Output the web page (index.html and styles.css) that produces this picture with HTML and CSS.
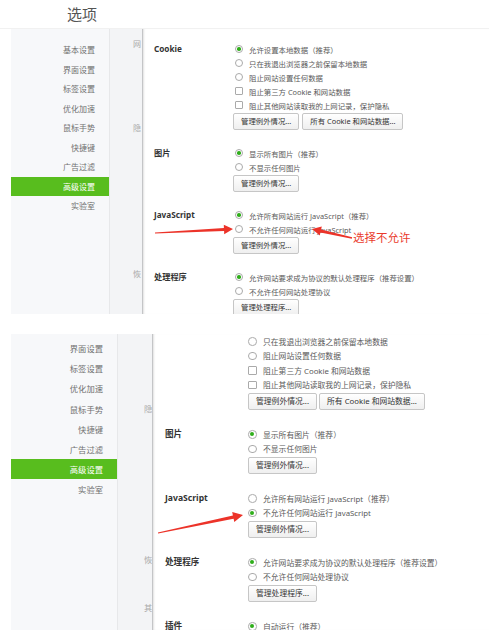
FILE: index.html
```html
<!DOCTYPE html>
<html lang="zh-CN">
<head>
<meta charset="utf-8">
<title>选项</title>
<link rel="stylesheet" href="styles.css">
</head>
<body>
<div class="page">
  <section class="shot shot-a">
    <header class="title">选项</header>
    <div class="frame">
      <nav class="side">
        <div class="item">基本设置</div>
        <div class="item">界面设置</div>
        <div class="item">标签设置</div>
        <div class="item">优化加速</div>
        <div class="item">鼠标手势</div>
        <div class="item">快捷键</div>
        <div class="item">广告过滤</div>
        <div class="item active">高级设置</div>
        <div class="item">实验室</div>
      </nav>
      <div class="groups">
        <span class="g g1">网</span>
        <span class="g g2">隐</span>
        <span class="g g3">恢</span>
      </div>
      <main class="content">
        <div class="sec">
          <div class="label">Cookie</div>
          <div class="opts">
            <div class="opt"><span class="radio on"></span>允许设置本地数据（推荐）</div>
            <div class="opt"><span class="radio"></span>只在我退出浏览器之前保留本地数据</div>
            <div class="opt"><span class="radio"></span>阻止网站设置任何数据</div>
            <div class="opt"><span class="check"></span>阻止第三方 Cookie 和网站数据</div>
            <div class="opt"><span class="check"></span>阻止其他网站读取我的上网记录，保护隐私</div>
            <div class="btns"><button class="btn">管理例外情况...</button><button class="btn">所有 Cookie 和网站数据...</button></div>
          </div>
        </div>
        <div class="sec">
          <div class="label">图片</div>
          <div class="opts">
            <div class="opt"><span class="radio on"></span>显示所有图片（推荐）</div>
            <div class="opt"><span class="radio"></span>不显示任何图片</div>
            <div class="btns"><button class="btn">管理例外情况...</button></div>
          </div>
        </div>
        <div class="sec">
          <div class="label">JavaScript</div>
          <div class="opts">
            <div class="opt"><span class="radio on"></span>允许所有网站运行 JavaScript（推荐）</div>
            <div class="opt"><span class="radio"></span>不允许任何网站运行 JavaScript</div>
            <div class="btns"><button class="btn">管理例外情况...</button></div>
          </div>
        </div>
        <div class="sec">
          <div class="label">处理程序</div>
          <div class="opts">
            <div class="opt"><span class="radio on"></span>允许网站要求成为协议的默认处理程序（推荐设置）</div>
            <div class="opt"><span class="radio"></span>不允许任何网站处理协议</div>
            <div class="btns"><button class="btn">管理处理程序...</button></div>
          </div>
        </div>
      </main>
    </div>
  </section>

  <section class="shot shot-b">
    <div class="frame">
      <nav class="side">
        <div class="item">界面设置</div>
        <div class="item">标签设置</div>
        <div class="item">优化加速</div>
        <div class="item">鼠标手势</div>
        <div class="item">快捷键</div>
        <div class="item">广告过滤</div>
        <div class="item active">高级设置</div>
        <div class="item">实验室</div>
      </nav>
      <div class="groups">
        <span class="g g1">隐</span>
        <span class="g g2">恢</span>
        <span class="g g3">其</span>
      </div>
      <main class="content">
        <div class="sec">
          <div class="label"></div>
          <div class="opts">
            <div class="opt"><span class="radio"></span>只在我退出浏览器之前保留本地数据</div>
            <div class="opt"><span class="radio"></span>阻止网站设置任何数据</div>
            <div class="opt"><span class="check"></span>阻止第三方 Cookie 和网站数据</div>
            <div class="opt"><span class="check"></span>阻止其他网站读取我的上网记录，保护隐私</div>
            <div class="btns"><button class="btn">管理例外情况...</button><button class="btn">所有 Cookie 和网站数据...</button></div>
          </div>
        </div>
        <div class="sec">
          <div class="label">图片</div>
          <div class="opts">
            <div class="opt"><span class="radio on"></span>显示所有图片（推荐）</div>
            <div class="opt"><span class="radio"></span>不显示任何图片</div>
            <div class="btns"><button class="btn">管理例外情况...</button></div>
          </div>
        </div>
        <div class="sec">
          <div class="label">JavaScript</div>
          <div class="opts">
            <div class="opt"><span class="radio"></span>允许所有网站运行 JavaScript（推荐）</div>
            <div class="opt"><span class="radio on"></span>不允许任何网站运行 JavaScript</div>
            <div class="btns"><button class="btn">管理例外情况...</button></div>
          </div>
        </div>
        <div class="sec">
          <div class="label">处理程序</div>
          <div class="opts">
            <div class="opt"><span class="radio on"></span>允许网站要求成为协议的默认处理程序（推荐设置）</div>
            <div class="opt"><span class="radio"></span>不允许任何网站处理协议</div>
            <div class="btns"><button class="btn">管理处理程序...</button></div>
          </div>
        </div>
        <div class="sec">
          <div class="label">插件</div>
          <div class="opts">
            <div class="opt"><span class="radio on"></span>自动运行（推荐）</div>
          </div>
        </div>
      </main>
    </div>
  </section>

  <svg class="annot" width="489" height="634" viewBox="0 0 489 634" aria-hidden="true">
    <polygon class="arrow" points="155,233.5 224.1,231.1 224.2,234.2 233,229 223.8,224.8 223.9,227.9 155,232.5"/>
    <polygon class="arrow" points="352.2,237.3 321.1,229.4 321.8,226.4 312,229 319.8,235.6 320.4,232.6 351.8,238.7"/>
    <polygon class="arrow" points="158.1,533.5 233.6,518.7 234.3,522.1 243,515 232.2,512.0 232.9,515.4 157.9,532.5"/>
  </svg>
  <div class="note">选择不允许</div>
</div>
</body>
</html>
```

FILE: styles.css
```css
* {
  box-sizing: border-box;
  margin: 0;
  padding: 0;
}

html,
body {
  background: #fff;
}

body {
  width: 489px;
  height: 634px;
  overflow: hidden;
  font-family: "Noto Sans", "Noto Sans CJK SC", sans-serif;
  color: #5a5a5a;
}

.page {
  position: relative;
  width: 489px;
  height: 634px;
}

/* ---------- shared panel structure ---------- */

.title {
  height: 28px;
  padding-left: 67px;
  font-family: "Noto Sans CJK SC", sans-serif;
  font-size: 15px;
  line-height: 27px;
  color: #555;
}

.frame {
  display: flex;
  padding-left: 11px;
  overflow: hidden;
}

.side {
  flex: none;
  background: #f7f8fa;
  border-right: 1px solid #e7e8ea;
}

.item {
  text-align: right;
  padding-right: 14px;
  color: #707070;
  font-family: "Noto Sans CJK SC", sans-serif;
  white-space: nowrap;
}

.item.active {
  background: #58bd1e;
  color: #fff;
}

.groups {
  flex: none;
  display: flex;
  flex-direction: column;
  align-items: flex-start;
  background: #f3f4f6;
  border-right: 1px solid #c4c5c7;
  overflow: hidden;
}

.g {
  white-space: nowrap;
  line-height: 10px;
  color: #a9a9a9;
  font-family: "Noto Sans CJK SC", sans-serif;
}

.content {
  flex: 1;
  background: #fff;
  box-shadow: inset 2px 0 2px -1px rgba(0, 0, 0, 0.12);
}

.sec {
  display: flex;
}

.label {
  flex: none;
  font-weight: 700;
  color: #333;
  white-space: nowrap;
}

.opts {
  display: flex;
  flex-direction: column;
  align-items: flex-start;
}

.opt {
  display: flex;
  align-items: center;
  white-space: nowrap;
}

.radio,
.check {
  flex: none;
  position: relative;
  background: #fff;
  border: 1px solid #aaa;
}

.radio {
  border-radius: 50%;
}

.check {
  border-radius: 1px;
}

.radio.on::after {
  content: "";
  position: absolute;
  inset: 1.2px;
  border-radius: 50%;
  background: #2fae1a;
}

.btns {
  display: flex;
  margin-top: 1px;
}

.btn {
  height: 17px;
  padding: 0 7px;
  border: 1px solid #c6c6c6;
  border-radius: 2px;
  background: linear-gradient(#ffffff, #efefef);
  font: inherit;
  color: #333;
  line-height: 15px;
  white-space: nowrap;
}

/* ---------- panel A (upper screenshot) ---------- */

.shot-a .frame {
  height: 286px;
  border-top: 1px solid #f1f1f1;
}

.shot-a .side {
  width: 99px;
  padding-top: 11.25px;
}

.shot-a .item {
  height: 19.5px;
  line-height: 19.5px;
  font-size: 8px;
}

.shot-a .groups {
  width: 33px;
  padding-left: 23px;
}

.shot-a .g {
  font-size: 8px;
}

.shot-a .g1 { margin-top: 10px; }
.shot-a .g2 { margin-top: 74px; }
.shot-a .g3 { margin-top: 136px; }

.shot-a .content {
  padding: 13px 0 0 11px;
  font-size: 7.4px;
}

.shot-a .sec + .sec {
  margin-top: 16px;
}

.shot-a .label {
  width: 79px;
  font-size: 8.2px;
  line-height: 14px;
}

.shot-a .opt {
  height: 14px;
  padding-left: 2px;
}

.shot-a .radio,
.shot-a .check {
  width: 8px;
  height: 8px;
  margin-right: 6px;
}

.shot-a .btns {
  gap: 3px;
}

/* ---------- panel B (lower screenshot) ---------- */

.shot-b {
  margin-top: 20px;
}

.shot-b .frame {
  height: 296px;
}

.shot-b .side {
  width: 107px;
  padding-top: 4px;
}

.shot-b .item {
  height: 20.2px;
  line-height: 20.2px;
  font-size: 8.3px;
}

.shot-b .groups {
  width: 35px;
  padding-left: 26px;
}

.shot-b .g {
  font-size: 8.3px;
}

.shot-b .g1 { margin-top: 69px; }
.shot-b .g2 { margin-top: 141px; }
.shot-b .g3 { margin-top: 38px; }

.shot-b .content {
  padding: 0 0 0 12px;
  font-size: 7.8px;
}

.shot-b .sec + .sec {
  margin-top: 17px;
}

.shot-b .label {
  width: 83px;
  font-size: 8.6px;
  line-height: 14.5px;
}

.shot-b .opt {
  height: 14.5px;
}

.shot-b .radio,
.shot-b .check {
  width: 8.5px;
  height: 8.5px;
  margin-right: 6.5px;
}

.shot-b .btns {
  gap: 2px;
}

/* ---------- annotations ---------- */

.annot {
  position: absolute;
  top: 0;
  left: 0;
  pointer-events: none;
}

.arrow {
  fill: #ec3329;
}

.note {
  position: absolute;
  left: 353px;
  top: 230px;
  font-family: "Noto Sans CJK SC", sans-serif;
  font-size: 11.5px;
  line-height: 14px;
  color: #ea3a2c;
  white-space: nowrap;
}
```
